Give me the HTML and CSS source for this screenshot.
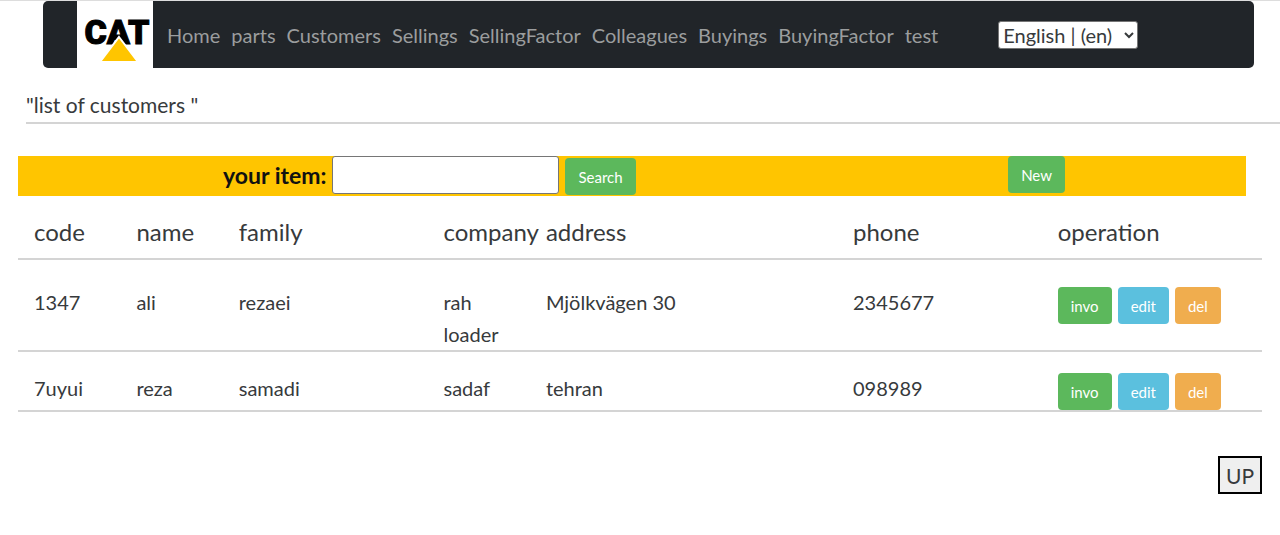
FILE: index.html
```html
<!DOCTYPE html>
<html lang="en">
<head>
<meta charset="utf-8">
<meta name="viewport" content="width=device-width, initial-scale=1">
<title>Customers</title>
<link rel="stylesheet" href="styles.css">
</head>
<body>
<header class="navbar" id="top">
  <a class="brand" href="#" aria-label="CAT home">
    <svg class="logo" viewBox="0 0 76 67" aria-hidden="true">
      <text class="logo-text" x="40" y="43" text-anchor="middle">CAT</text>
      <path d="M42 36 L61 61 H23 Z" fill="#ffc500" stroke="#fff" stroke-width="2"/>
    </svg>
  </a>
  <nav class="links">
    <a href="#">Home</a>
    <a href="#">parts</a>
    <a href="#">Customers</a>
    <a href="#">Sellings</a>
    <a href="#">SellingFactor</a>
    <a href="#">Colleagues</a>
    <a href="#">Buyings</a>
    <a href="#">BuyingFactor</a>
    <a href="#">test</a>
  </nav>
  <select class="language" aria-label="Language">
    <option>English | (en)</option>
  </select>
</header>

<main>
  <h1 class="title">"list of customers "</h1>

  <div class="toolbar">
    <form class="search">
      <label for="item">your item:</label>
      <input class="search-input" id="item" type="text">
      <button class="btn btn-green btn-search" type="button">Search</button>
    </form>
    <button class="btn btn-green" type="button">New</button>
  </div>

  <table class="customers">
    <colgroup>
      <col class="col-1"><col class="col-1"><col class="col-2"><col class="col-1"><col class="col-3"><col class="col-2"><col>
    </colgroup>
    <thead>
      <tr><th>code</th><th>name</th><th>family</th><th>company</th><th>address</th><th>phone</th><th>operation</th></tr>
    </thead>
    <tbody>
      <tr>
        <td>1347</td><td>ali</td><td>rezaei</td><td>rah loader</td><td>Mjölkvägen 30</td><td>2345677</td>
        <td><div class="actions"><button class="btn btn-green" type="button">invo</button><button class="btn btn-blue" type="button">edit</button><button class="btn btn-orange" type="button">del</button></div></td>
      </tr>
      <tr>
        <td>7uyui</td><td>reza</td><td>samadi</td><td>sadaf</td><td>tehran</td><td>098989</td>
        <td><div class="actions"><button class="btn btn-green" type="button">invo</button><button class="btn btn-blue" type="button">edit</button><button class="btn btn-orange" type="button">del</button></div></td>
      </tr>
    </tbody>
  </table>

  <div class="footer">
    <button class="up" type="button">UP</button>
  </div>
</main>
</body>
</html>
```

FILE: styles.css
```css
* { box-sizing: border-box; }

body {
  margin: 0;
  border-top: 1px solid #ddd;
  background: #fff;
  color: #373a3c;
  font-family: "Gill Sans", "Gill Sans MT", Lato, sans-serif;
  font-size: 20px;
  line-height: 32px;
}

button, input, select { font-family: inherit; color: inherit; }

.navbar {
  display: flex;
  align-items: center;
  margin: 0 26px 0 43px;
  padding-left: 34px;
  border-radius: 5px;
  background: #212529;
}

.brand { display: block; background: #fff; }
.logo { display: block; width: 76px; height: 67px; }
.logo-text {
  font-family: Roboto, sans-serif;
  font-size: 34px;
  font-weight: 900;
  fill: #000;
  stroke: #000;
  stroke-width: 1px;
}

.links { display: flex; gap: 11px; margin-left: 14px; }
.links a { color: #9b9d9e; text-decoration: none; }

.language {
  width: 140px;
  height: 28px;
  margin-left: 60px;
  padding: 0;
  border: 1px solid #767676;
  border-radius: 3px;
  background-color: #fff;
  font-size: 20px;
}

.title {
  margin: 21px 0 32px 26px;
  padding-bottom: 1px;
  border-bottom: 2px solid #d4d4d4;
  font-size: 21px;
  font-weight: 400;
}

.toolbar {
  display: flex;
  align-items: flex-start;
  justify-content: space-between;
  height: 40px;
  margin: 0 34px 0 18px;
  padding: 0 181px 0 205px;
  background: #ffc500;
}

.search { display: flex; align-items: flex-start; gap: 6px; }
.search label {
  color: #111;
  font-size: 23px;
  font-weight: 700;
  line-height: 38px;
}
.search-input {
  width: 227px;
  height: 38px;
  border: 1px solid #767676;
  border-radius: 3px;
  font-size: 20px;
}

.btn {
  height: 37px;
  padding: 0 13px;
  border: 0;
  border-radius: 4px;
  color: #fff;
  font-size: 15px;
}
.btn-green { background: #5cb85c; }
.btn-blue { background: #5bc0de; }
.btn-orange { background: #f0ad4e; }
.btn-search { margin-top: 2px; }

.customers {
  width: calc(100% - 36px);
  margin-left: 18px;
  border-collapse: collapse;
  table-layout: fixed;
}
.col-1 { width: 8.23%; }
.col-2 { width: 16.46%; }
.col-3 { width: 24.69%; }

.customers tr { border-bottom: 2px solid #d4d4d4; }
.customers th {
  padding: 18px 0 8px 16px;
  font-size: 24px;
  font-weight: 400;
  line-height: 36px;
  text-align: left;
  white-space: nowrap;
}
.customers td { padding: 20px 0 0 16px; vertical-align: top; }
.customers tbody tr:first-child td { padding-top: 26px; }

.actions { display: flex; gap: 6px; padding-top: 1px; }

.footer { display: flex; justify-content: flex-end; margin: 44px 18px 0 0; }
.up {
  height: 38px;
  padding: 0 6px;
  border: 2px solid #000;
  background: #efefef;
  font-size: 21px;
}
```
